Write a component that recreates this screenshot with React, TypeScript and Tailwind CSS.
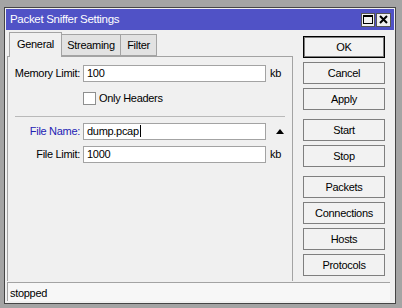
import React from 'react';

const SideButton = ({ label, primary = false, className = '' }: { label: string; primary?: boolean; className?: string }) => (
  <button
    type="button"
    className={`h-[22px] w-full border bg-[#f2f2f2] text-[11px] leading-none tracking-[-0.3px] text-black ${
      primary ? 'border-black shadow-[inset_0_0_0_1px_#7d7d7d]' : 'border-[#7f7f7f]'
    } ${className}`}
  >
    {label}
  </button>
);

const TextField = ({ value, caret = false }: { value: string; caret?: boolean }) => (
  <div className="ml-[2px] flex h-[17px] w-[183px] items-center border border-[#a3a3a3] bg-white pl-[3px] text-[11px] text-black">
    {value}
    {caret && <span className="ml-px h-[12px] w-px bg-black" />}
  </div>
);

const FieldRow = ({ label, children, blue = false, className = '' }: { label: string; children: React.ReactNode; blue?: boolean; className?: string }) => (
  <div className={`flex items-center ${className}`}>
    <div className={`w-[73px] pr-px text-right text-[11px] ${blue ? 'text-[#2323b4]' : 'text-black'}`}>{label}</div>
    {children}
  </div>
);

export default function App() {
  return (
    <div className="h-[308px] w-[402px] overflow-hidden bg-[#a4a4a4] pl-[4px] pt-[7px] font-['Liberation_Sans',Arial,sans-serif] tracking-[-0.3px]">
      <div className="flex h-[297px] w-[392px] flex-col border border-[#454545] bg-[#f0f0f0] p-px">
        {/* title bar */}
        <div className="flex h-[21px] shrink-0 items-center justify-between bg-[#5052c6] pl-[4px] pr-[3px]">
          <span className="pt-px text-[11.5px] tracking-[-0.3px] text-white">Packet Sniffer Settings</span>
          <div className="flex gap-px">
            <div className="flex h-[14px] w-[14px] items-center justify-center border border-[#555] bg-[#f0f0f0]">
              <svg width="10" height="9" viewBox="0 0 10 9">
                <rect x="0.5" y="0.5" width="9" height="8" fill="none" stroke="#000" />
                <rect x="0" y="0" width="10" height="2" fill="#000" />
              </svg>
            </div>
            <div className="flex h-[14px] w-[15px] items-center justify-center border border-[#555] bg-[#f0f0f0]">
              <svg width="9" height="9" viewBox="0 0 9 9">
                <path d="M1 1 L8 8 M8 1 L1 8" stroke="#000" strokeWidth="2" />
              </svg>
            </div>
          </div>
        </div>

        <div className="flex flex-1 flex-col">
          <div className="flex">
            {/* tabs + panel */}
            <div className="ml-px flex w-[286px] flex-col pt-[2px]">
              <div className="flex h-[24px] items-end pl-[2px] text-[11px] text-black">
                <div className="relative z-10 -mb-px flex h-[25px] w-[53px] items-center justify-center border border-b-0 border-[#a3a3a3] bg-[#f0f0f0] pb-[2px]">
                  General
                </div>
                <div className="flex h-[22px] w-[59px] items-center justify-center border-y border-r border-[#a3a3a3] bg-[#e2e2e2]">
                  Streaming
                </div>
                <div className="flex h-[22px] w-[36px] items-center justify-center border-y border-r border-[#a3a3a3] bg-[#e2e2e2]">
                  Filter
                </div>
              </div>
              <div className="h-[225px] border-x border-t border-[#a3a3a3] pt-[8px]">
                <FieldRow label="Memory Limit:">
                  <TextField value="100" />
                  <span className="ml-[4px] text-[11px] text-black">kb</span>
                </FieldRow>
                <div className="mt-[8px] flex items-center pl-[75px]">
                  <div className="h-[13px] w-[13px] border border-[#8e8f8f] bg-white" />
                  <span className="ml-[3px] text-[11px] text-black">Only Headers</span>
                </div>
                <div className="mx-[7px] mt-[9px] h-px bg-[#b9b9b9]" />
                <FieldRow label="File Name:" blue className="mt-[6px]">
                  <TextField value="dump.pcap" caret />
                  <svg className="ml-[10px]" width="8" height="5" viewBox="0 0 8 5">
                    <polygon points="4,0 8,5 0,5" fill="#000" />
                  </svg>
                </FieldRow>
                <FieldRow label="File Limit:" className="mt-[6px]">
                  <TextField value="1000" />
                  <span className="ml-[4px] text-[11px] text-black">kb</span>
                </FieldRow>
              </div>
            </div>

            {/* buttons */}
            <div className="ml-[10px] flex w-[82px] flex-col pt-[6px]">
              <SideButton label="OK" primary />
              <SideButton label="Cancel" className="mt-[4px]" />
              <SideButton label="Apply" className="mt-[4px]" />
              <SideButton label="Start" className="mt-[9px]" />
              <SideButton label="Stop" className="mt-[4px]" />
              <SideButton label="Packets" className="mt-[9px]" />
              <SideButton label="Connections" className="mt-[4px]" />
              <SideButton label="Hosts" className="mt-[4px]" />
              <SideButton label="Protocols" className="mt-[4px]" />
            </div>
          </div>

          {/* status bar */}
          <div className="ml-px mr-[4px] mt-px flex h-[19px] items-center border-l border-t border-[#a3a3a3] bg-[#f7f7f7] pl-[2px] pt-[2px] text-[11px] text-black">
            stopped
          </div>
        </div>
      </div>
    </div>
  );
}
